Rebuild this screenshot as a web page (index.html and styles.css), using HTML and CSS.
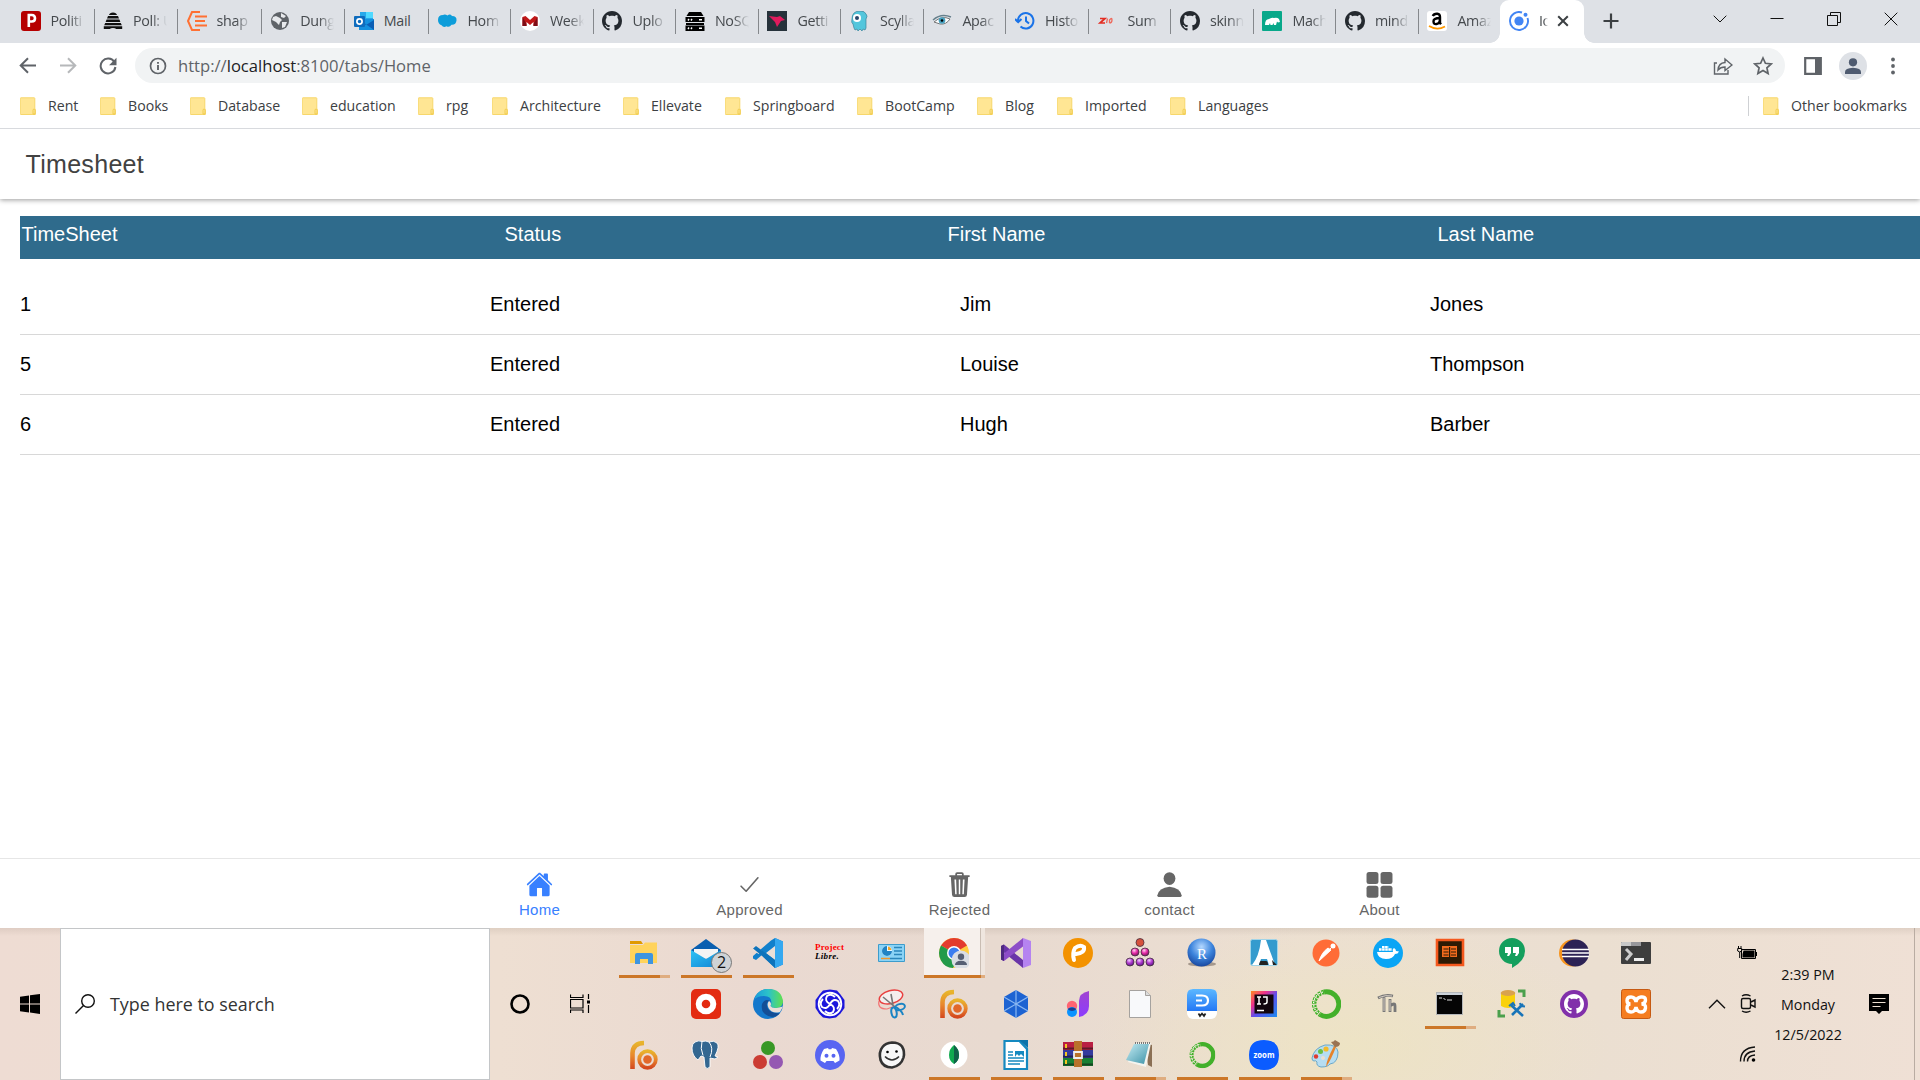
FILE: index.html
```html
<!DOCTYPE html>
<html lang="en">
<head>
<meta charset="utf-8">
<title>Timesheet</title>
<link rel="stylesheet" href="styles.css">
</head>
<body>
<svg class="defs" width="0" height="0" aria-hidden="true">
  <defs>
    <linearGradient id="gRo" x1="0" y1="0" x2="0" y2="1"><stop offset="0" stop-color="#e8b42c"/><stop offset=".5" stop-color="#e8862c"/><stop offset="1" stop-color="#d4481e"/></linearGradient>
    <linearGradient id="gBlue" x1="0" y1="0" x2="0" y2="1"><stop offset="0" stop-color="#5cb8ff"/><stop offset="1" stop-color="#2478f5"/></linearGradient>
    <linearGradient id="gMail" x1="0" y1="0" x2="1" y2="1"><stop offset="0" stop-color="#2fc3f5"/><stop offset="1" stop-color="#1184d4"/></linearGradient>
    <linearGradient id="gEdge" x1="0" y1="0" x2="1" y2="0"><stop offset="0" stop-color="#1a9bdc"/><stop offset=".5" stop-color="#2cc3c8"/><stop offset="1" stop-color="#62e04c"/></linearGradient>
    <linearGradient id="gPurple" x1="0" y1="0" x2="0" y2="1"><stop offset="0" stop-color="#a144d0"/><stop offset="1" stop-color="#8c3cff"/></linearGradient>
    <linearGradient id="gIj" x1="0" y1="0" x2="1" y2="1"><stop offset="0" stop-color="#ff8a1f"/><stop offset=".3" stop-color="#f0308c"/><stop offset=".55" stop-color="#5a50f0"/><stop offset="1" stop-color="#1c8cf0"/></linearGradient>
    <linearGradient id="gPad" x1="0" y1="0" x2="1" y2="1"><stop offset="0" stop-color="#c4ecf4"/><stop offset="1" stop-color="#3e93a8"/></linearGradient>
    <radialGradient id="gR" cx=".5" cy=".3" r=".7"><stop offset="0" stop-color="#b4d8ff"/><stop offset=".55" stop-color="#3c84dc"/><stop offset="1" stop-color="#1a48a0"/></radialGradient>
    <radialGradient id="gPink" cx=".4" cy=".3" r=".7"><stop offset="0" stop-color="#ffd0f0"/><stop offset=".5" stop-color="#e82ca8"/><stop offset="1" stop-color="#7a1560"/></radialGradient>
    <radialGradient id="gViolet" cx=".4" cy=".3" r=".7"><stop offset="0" stop-color="#f0d0ff"/><stop offset=".5" stop-color="#b23cd0"/><stop offset="1" stop-color="#5a1a80"/></radialGradient>
    <symbol id="folder" viewBox="0 0 16 18"><path d="M1 .8h13.2q.6 0 .6.6v10l1 1v4.400q0 .7-.7.7H1q-.8 0-.8-.8V1.600Q.2.800 1 .8z" fill="#ffe694" stroke="#f7d76b"/><path d="M13 17v-3.600q0-1.400 1-1.400t1 1.400V17z" fill="#ffe694" stroke="#edc63f" stroke-width=".8"/></symbol>
    <symbol id="github" viewBox="0 0 16 16"><path d="M8 0C3.580 0 0 3.580 0 8c0 3.540 2.290 6.530 5.470 7.590.4.070.55-.17.55-.38 0-.19-.01-.82-.01-1.490-2.010.37-2.530-.49-2.690-.94-.09-.23-.48-.94-.82-1.130-.28-.15-.68-.52-.01-.53.63-.01 1.080.58 1.230.82.72 1.210 1.870.87 2.330.66.07-.52.28-.87.51-1.070-1.780-.2-3.640-.89-3.640-3.950 0-.87.31-1.590.82-2.150-.08-.2-.36-1.020.08-2.120 0 0 .67-.21 2.200.82.64-.18 1.320-.27 2-.27s1.360.09 2 .27c1.530-1.040 2.200-.82 2.200-.82.44 1.100.16 1.920.08 2.120.51.56.82 1.270.82 2.150 0 3.070-1.870 3.750-3.650 3.950.29.25.54.73.54 1.480 0 1.070-.01 1.930-.01 2.200 0 .21.15.46.55.38A8 8 0 0 0 16 8c0-4.420-3.580-8-8-8z"/></symbol>
    <symbol id="ro" viewBox="0 0 30 30"><g fill="none" stroke="url(#gRo)"><path d="M3.500 29V13Q4 3.200 15 3" stroke-width="4.600"/><circle cx="18.500" cy="19.500" r="8.300" stroke-width="3.800"/></g><circle cx="18.500" cy="19.500" r="4.300" fill="#e2682a"/></symbol>
    <symbol id="ring" viewBox="0 0 30 30"><path d="M13 3A12.300 12.300 0 1 1 9 25.500" fill="none" stroke="#43b02a" stroke-width="5"/><path d="M13 3A12.300 12.300 0 0 0 9 25.500" fill="none" stroke="#43b02a" stroke-width="4.500" stroke-dasharray="2.500 1"/><path d="M12 3A12 12 0 0 0 7 24" fill="none" stroke="#fff" stroke-width="1.200" stroke-dasharray="1.500 2"/></symbol>
  </defs>
</svg>

<div class="tabstrip">
  <div class="tab"><svg class="fav" viewBox="0 0 20 20"><rect width="20" height="20" rx="3" fill="#b60000"/><path d="M7.800 16V4h3q3.200 0 3.200 3.200T10.800 10.500h-3" fill="none" stroke="#fff" stroke-width="2.600"/></svg><span class="label">Politi</span></div>
  <div class="tab wide"><svg class="fav" viewBox="0 0 20 20"><g fill="#111"><path d="M6 4q.6-2.500 4-2.500T14 4zM5 5h10l1 2.500H4zM3.600 8.500h12.800l1 2.500H2.600zM2.200 12h15.600l1 2.300H1.200zM.8 15.300h18.400v2.700h-6q-.8-1-3.200-1t-3.200 1h-6z"/></g></svg><span class="label">Poll: U</span></div>
  <div class="tab wide"><svg class="fav" viewBox="0 0 20 20"><g fill="none" stroke="#ff7033" stroke-width="2"><path d="M13 1H5L1 10l4 9h8M8 5.500h12M8 10h10M8 14.500h12"/></g></svg><span class="label">shap</span></div>
  <div class="tab wide"><svg class="fav" viewBox="0 0 20 20"><circle cx="10" cy="10" r="9" fill="#5f6368"/><path d="M3 6l3-1 4 2 2 2-2 2-1 3-3-3-4-2zM11 2l5 3-2 2-3-1zM12 11l5 0-2 5-3 1z" fill="#e7e9ec"/></svg><span class="label">Dung</span></div>
  <div class="tab wide"><svg class="fav" viewBox="0 0 20 20"><rect x="6" y="1" width="13" height="9" fill="#28a8ea"/><path d="M12 1h7v6h-7z" fill="#50d9ff"/><path d="M5 8h15v11H5z" fill="#1490df"/><path d="M6 9l6 5 8-5v10z" fill="#0a5eb5"/><rect y="5" width="11" height="11" rx="1" fill="#0f6cbd"/><circle cx="5.500" cy="10.500" r="2.600" fill="none" stroke="#fff" stroke-width="1.700"/></svg><span class="label short">Mail</span></div>
  <div class="tab"><svg class="fav" viewBox="0 0 20 20"><path d="M1 9q0-5 5-5 2-1 4.500.5Q13 2.500 15 5q5 0 4.500 4.500-.5 4.500-5 4.200-2 3-5 1.500-3 2-5-1Q1 13 1 9z" fill="#0d9dda"/></svg><span class="label">Hom</span></div>
  <div class="tab"><svg class="fav" viewBox="0 0 20 20"><circle cx="10" cy="10" r="10" fill="#fff"/><path d="M2.500 6l3-1L10 9l4.500-4 3 1v9h-4v-4L10 14l-3.500-3v4h-4z" fill="#c01818"/><path d="M2.500 6v9h4v-2zM17.500 6v9h-4v-2z" fill="#7d0d16"/></svg><span class="label">Week</span></div>
  <div class="tab"><svg class="fav ink"><use href="#github"/></svg><span class="label">Uplo</span></div>
  <div class="tab"><svg class="fav" viewBox="0 0 20 20"><path d="M4 1h12l2.500 4h-17zM.5 6h19v5H.5zM1 12h18v2H1zM.5 14.500h19V20H.5z"/><path d="M3 9.500l1-1.500M6 9.500l1-1.500M14 8.700h3M3 18l1-1.500M6 18l1-1.500M14 17.300h3" stroke="#fff" stroke-width="1.400"/></svg><span class="label">NoSQ</span></div>
  <div class="tab"><svg class="fav" viewBox="0 0 20 20"><rect width="20" height="20" fill="#26323b"/><path d="M2 5l8 1 3-1 5 4-4 1-4 6-2-5z" fill="#e01b5d"/></svg><span class="label">Getti</span></div>
  <div class="tab"><svg class="fav" viewBox="0 0 20 20"><path d="M2 8Q2 0 10 0q5 0 6 3 2 2 0 5v9l-1 2-2-1-1 2-2-2-2 2-1-2-2 1-1-2-1-4Q1 12 2 8z" fill="#53c6dc" stroke="#39839a" stroke-width=".7"/><circle cx="7" cy="7" r="4" fill="#fff"/><circle cx="7" cy="7" r="2" fill="#27466b"/></svg><span class="label">Scylla</span></div>
  <div class="tab"><svg class="fav" viewBox="0 0 20 20"><path d="M1 9Q9 2 19 6" stroke="#657f8b" fill="none" stroke-width="1.400"/><path d="M2 11q8-7 16-3-4 6-10 5z" fill="#fff" stroke="#777"/><circle cx="10" cy="9.500" r="3.300" fill="#47a0bf"/><circle cx="10" cy="9.500" r="1.300"/></svg><span class="label">Apac</span></div>
  <div class="tab"><svg class="fav" viewBox="0 0 20 20"><g fill="none" stroke="#1a73e8" stroke-width="2"><path d="M3 10a7.700 7.700 0 1 1 2.500 5.500M0 8l3.200 3.200L6.500 8M11 5.500V10l3 2.500"/></g></svg><span class="label">Histo</span></div>
  <div class="tab"><svg class="fav" viewBox="0 0 20 20"><path d="M3 7.500h5l-5 4.500h5" stroke="#e32d22" stroke-width="1.700" fill="none"/><path d="M10.500 7.500l-1 4.500M12.500 12V9q2.500-3 2.500 0t-2.500 3" stroke="#ee6a5d" stroke-width="1.300" fill="none"/></svg><span class="label">Sum</span></div>
  <div class="tab"><svg class="fav ink"><use href="#github"/></svg><span class="label">skinn</span></div>
  <div class="tab"><svg class="fav" viewBox="0 0 20 20"><rect width="20" height="20" rx="1" fill="#08a88a"/><path d="M3 14q0-6 4-6 3-2 5-1 3-1 5 1l1 3-2 .5-1-1-1 3.500h-2l-.5-2-1 2H8.500L8 12l-1 2z" fill="#fff"/></svg><span class="label">Mach</span></div>
  <div class="tab"><svg class="fav ink"><use href="#github"/></svg><span class="label">mind</span></div>
  <div class="tab last"><svg class="fav" viewBox="0 0 20 20"><rect width="20" height="20" rx="3" fill="#fff"/><path d="M5.800 5q1-2.500 4.500-2.300Q13 3 13 6v6l1 1.300M13 7Q6.500 7 6.500 10.300T9.500 13Q13 12.500 13 8" fill="none" stroke="#000" stroke-width="2.400"/><path d="M2 15q8 5 16 .5" fill="none" stroke="#f90" stroke-width="1.700"/></svg><span class="label">Amaz</span></div>
  <div class="tab active"><svg class="fav" viewBox="0 0 20 20"><path d="M13 1.500A9 9 0 1 0 18.500 7" fill="none" stroke="#4285f4" stroke-width="1.900"/><circle cx="10" cy="10" r="4.600" fill="#4285f4"/><circle cx="16.500" cy="3.700" r="2" fill="#4285f4"/></svg><span class="label">Io</span><svg class="tabclose" viewBox="0 0 12 12"><path d="M1.200 1.200l9.600 9.600M10.800 1.200l-9.600 9.600" stroke="#3c4043" stroke-width="2"/></svg></div>
  <svg class="newtab" viewBox="0 0 16 16"><path d="M8 .5v15M.5 8h15" stroke="#3c4043" stroke-width="2.200"/></svg>
  <div class="winbtns">
    <svg viewBox="0 0 14 14"><path d="M.7 3.700L7 10l6.300-6.300" class="thin"/></svg>
    <svg viewBox="0 0 14 14"><path d="M.5 6.500h13" class="thin"/></svg>
    <svg viewBox="0 0 14 14"><path d="M.5 3.500h10v10H.500zM3.500 3.500v-3h10v10h-3" class="thin"/></svg>
    <svg viewBox="0 0 14 14"><path d="M.7.7l12.600 12.600M13.300.7L.7 13.300" class="thin"/></svg>
  </div>
</div>

<div class="toolbar">
  <svg class="nav" viewBox="0 0 18 18"><path d="M17 8.500H2M9 1.200L1.700 8.500 9 15.800" class="line"/></svg>
  <svg class="nav faded" viewBox="0 0 18 18"><path d="M1 8.500h15M9 1.200l7.300 7.300L9 15.800" class="line"/></svg>
  <svg class="nav" viewBox="0 0 18 18"><path d="M15.300 5A7.400 7.400 0 1 0 16.400 10" class="line"/><path d="M17.500.8v7.400h-7.400z" fill="#5f6368"/></svg>
  <div class="omnibox">
    <svg class="info" viewBox="0 0 18 18"><circle cx="9" cy="9" r="7.500" fill="none" stroke="#5f6368" stroke-width="1.700"/><path d="M9 8v5M9 5v1.800" stroke="#5f6368" stroke-width="1.900"/></svg>
    <span class="url">http://<b>localhost</b>:8100/tabs/Home</span>
    <svg class="share" viewBox="0 0 20 20"><path d="M4 7H1.500v11H15v-4" class="hair"/><path d="M5 14q.5-7 7-7.500V3l7 6-7 5.500V11q-4.500 0-7 3z" class="hair"/></svg>
    <svg class="star" viewBox="0 0 20 20"><path d="M10 2l2.400 5.300 5.800.6-4.300 3.900 1.200 5.700L10 14.600l-5.100 2.900 1.200-5.700L1.800 7.900l5.800-.6z" fill="none" stroke="#5f6368" stroke-width="1.700"/></svg>
  </div>
  <svg class="panel" viewBox="0 0 18 18"><path d="M1.200 1.200h15.600v15.600H1.200z" fill="none" stroke="#5f6368" stroke-width="2.200"/><path d="M11 1h6v16h-6z" fill="#5f6368"/></svg>
  <svg class="avatar" viewBox="0 0 28 28"><circle cx="14" cy="14" r="14" fill="#dee1e6"/><circle cx="14" cy="10.300" r="4.100" fill="#4f5b70"/><path d="M6 22v-2q0-4 8-4.300 8 .3 8 4.300v2z" fill="#4f5b70"/></svg>
  <svg class="dots" viewBox="0 0 4 18"><circle cx="2" cy="2.500" r="1.900"/><circle cx="2" cy="9" r="1.900"/><circle cx="2" cy="15.500" r="1.900"/></svg>
</div>

<div class="bookmarks">
  <div class="bm"><svg><use href="#folder"/></svg>Rent</div>
  <div class="bm"><svg><use href="#folder"/></svg>Books</div>
  <div class="bm"><svg><use href="#folder"/></svg>Database</div>
  <div class="bm"><svg><use href="#folder"/></svg>education</div>
  <div class="bm"><svg><use href="#folder"/></svg>rpg</div>
  <div class="bm"><svg><use href="#folder"/></svg>Architecture</div>
  <div class="bm"><svg><use href="#folder"/></svg>Ellevate</div>
  <div class="bm"><svg><use href="#folder"/></svg>Springboard</div>
  <div class="bm"><svg><use href="#folder"/></svg>BootCamp</div>
  <div class="bm"><svg><use href="#folder"/></svg>Blog</div>
  <div class="bm"><svg><use href="#folder"/></svg>Imported</div>
  <div class="bm"><svg><use href="#folder"/></svg>Languages</div>
  <div class="bm other"><svg><use href="#folder"/></svg>Other bookmarks</div>
</div>

<header class="app-header"><h1>Timesheet</h1></header>

<main class="content">
  <div class="thead"><span>TimeSheet</span><span>Status</span><span>First Name</span><span>Last Name</span></div>
  <div class="trow"><span>1</span><span>Entered</span><span>Jim</span><span>Jones</span></div>
  <div class="trow"><span>5</span><span>Entered</span><span>Louise</span><span>Thompson</span></div>
  <div class="trow"><span>6</span><span>Entered</span><span>Hugh</span><span>Barber</span></div>
</main>

<nav class="tabbar">
  <div class="tb selected"><svg viewBox="0 0 512 512"><path d="M261.560 101.280a8 8 0 0 0-11.060 0L66.400 277.150a8 8 0 0 0-2.470 5.790L63.900 448a32 32 0 0 0 32 32H192a16 16 0 0 0 16-16V328a8 8 0 0 1 8-8h80a8 8 0 0 1 8 8v136a16 16 0 0 0 16 16h96.060a32 32 0 0 0 32-32V282.940a8 8 0 0 0-2.470-5.790z"/><path d="M490.910 244.150l-74.800-71.560V64a16 16 0 0 0-16-16h-48a16 16 0 0 0-16 16v32l-57.920-55.380C272.770 35.140 264.710 32 256 32c-8.680 0-16.720 3.140-22.140 8.630L21.160 244.130c-6.220 6-7 15.870-1.340 22.370A16 16 0 0 0 43 267.560L250.500 69.280a8 8 0 0 1 11.060 0l207.520 198.280a16 16 0 0 0 22.590-.44c6.140-6.360 5.630-16.860-.76-22.970z"/></svg><span>Home</span></div>
  <div class="tb"><svg viewBox="0 0 512 512"><path d="M416 128L192 384l-96-96" fill="none" stroke="#666" stroke-width="30" stroke-linecap="round" stroke-linejoin="round"/></svg><span>Approved</span></div>
  <div class="tb"><svg viewBox="0 0 512 512"><path fill-rule="evenodd" d="M64 80h112V58q0-34 34-34h92q34 0 34 34v22h112v32h-28l-22 336q-3 44-45 44H159q-42 0-45-44L92 112H64zM210 80h92V56h-92zM160 160l14 280h28l-10-280zM242 160v280h28V160zM320 160l-10 280h28l14-280z"/></svg><span>Rejected</span></div>
  <div class="tb"><svg viewBox="0 0 512 512"><ellipse cx="256" cy="144" rx="112" ry="120"/><path d="M48 492q-24 0-22-30 25-142 230-164 205 22 230 164 2 30-22 30z"/></svg><span>contact</span></div>
  <div class="tb"><svg viewBox="0 0 512 512"><rect x="10" y="20" width="226" height="226" rx="48"/><rect x="276" y="20" width="226" height="226" rx="48"/><rect x="10" y="280" width="226" height="226" rx="48"/><rect x="276" y="280" width="226" height="226" rx="48"/></svg><span>About</span></div>
</nav>

<div class="taskbar">
  <div class="start"><svg viewBox="0 0 20 20"><path d="M0 2.800l9-1.300v8H0zM10 1.300L20 0v9.500H10zM0 10.500h9v8l-9-1.300zM10 10.500h10V20l-10-1.400z"/></svg></div>
  <div class="search"><svg viewBox="0 0 20 20"><circle cx="13" cy="7" r="6.300" fill="none" stroke="#111" stroke-width="1.400"/><path d="M8.500 11.500L.5 19.500" stroke="#111" stroke-width="1.400"/></svg><span>Type here to search</span></div>
  <div class="sys"><svg viewBox="0 0 20 20"><circle cx="10" cy="10" r="8.500" fill="none" stroke="#000" stroke-width="2.600"/></svg></div>
  <div class="sys view"><svg viewBox="0 0 20 20"><path d="M.5.500v3h12.500v-3M.5 5.500h12.500v8.500H.500zM.5 19v-3h12.500v3M18.500 0v5M18.500 11v8" fill="none" stroke="#000" stroke-width="1.200"/><path d="M17 6.500h3v3h-3z"/></svg></div>

  <div class="apps">
    <div class="app open multi"><svg viewBox="0 0 30 30"><path d="M1 3h11l2 3H1z" fill="#e09a00"/><path d="M1 7h13l2-2.500h12V25H1z" fill="#ffd35c"/><path d="M6 26V17q0-2 2-2h14q2 0 2 2v9h-5v-5h-8v5z" fill="#3e95e0"/></svg></div>
    <div class="app open"><svg viewBox="0 0 30 30"><path d="M0 12L15 1l15 11v6H0z" fill="#0a5fb0"/><path d="M3 11h24v9H3z" fill="#f4f4f4"/><path d="M0 12l15 9L30 12v17H0z" fill="url(#gMail)"/></svg><em>2</em></div>
    <div class="app open"><svg viewBox="0 0 30 30"><path d="M22 0l8 3.500v23L22 30 9 17l-6 5-3-1.500V18L18 2.500z" fill="#1180cc"/><path d="M22 8v14l-9-7zM0 12V9.500L3 8l6 5-3.500 3z" fill="#ecdfd7"/><path d="M0 10.500L3 8l19 14v8L8 17z" fill="#0e73bb"/><path d="M22 0l8 3.500v23L22 30z" fill="#35a8f0"/></svg></div>
    <div class="app"><div class="plibre"><b>Project</b><i>Libre.</i></div></div>
    <div class="app"><svg viewBox="0 0 30 30"><path d="M1.500 6.500h26v17h-26z" fill="#8bd3f6" stroke="#3c9ccc"/><circle cx="10" cy="13" r="5" fill="#e9f8ff"/><path d="M10 13V8a5 5 0 1 0 5 5z" fill="#2083c4"/><path d="M11 12V8.500q3 .5 3.500 3.500z" fill="#f2a424"/><path d="M17 9.500h8M17 13h8M17 16.500h8M13 20.500h12" stroke="#2b87bc" stroke-width="1.500"/><path d="M4 20.500h9" stroke="#f0962b" stroke-width="1.500"/></svg></div>
    <div class="app open focus"><svg viewBox="0 0 30 30"><circle cx="15" cy="15" r="15" fill="#ffcd40"/><path d="M15 15L2 7.500Q7 0 15 0q9 0 13 7.500z" fill="#e33b2e"/><path d="M15 15L2 7.500Q-2 15 2 22.500T14 30l6-12z" fill="#229a4a"/><circle cx="15" cy="15" r="7" fill="#fff"/><circle cx="15" cy="15" r="5.500" fill="#3a7df0"/><circle cx="22" cy="22" r="9.500" fill="#d9dde3"/><circle cx="22" cy="18.700" r="3.200" fill="#555f73"/><path d="M16 27q0-4 6-4.200 6 .2 6 4.200z" fill="#555f73"/></svg></div>
    <div class="app"><svg viewBox="0 0 30 30"><path d="M0 8l3-1.500L22 22v8L3 14.500V23l-3-1.500z" fill="#6a35a8"/><path d="M0 21.500L3 23 22 8.500V0L3 15.500z" fill="#8d4dc8"/><path d="M0 8l3-1.500V23l-3-1.500z" fill="#4e2a80"/><path d="M22 0l8 3v24l-8 3z" fill="#b583f0"/></svg></div>
    <div class="app"><svg viewBox="0 0 30 30"><circle cx="15" cy="15" r="15" fill="#f39200"/><path d="M11 22q-2-7 1-12 5-4 9-1 1 6-8 7" fill="none" stroke="#fff" stroke-width="4" stroke-linecap="round"/></svg></div>
    <div class="app"><svg viewBox="0 0 30 30"><g stroke="#453040" stroke-width=".8"><circle cx="15" cy="4.500" r="4" fill="#d6503c"/><circle cx="10" cy="14" r="4" fill="url(#gPink)"/><circle cx="20" cy="14" r="4" fill="url(#gPink)"/><circle cx="5" cy="24" r="4" fill="url(#gViolet)"/><circle cx="15" cy="24" r="4" fill="url(#gViolet)"/><circle cx="25" cy="24" r="4" fill="url(#gViolet)"/></g></svg></div>
    <div class="app"><svg viewBox="0 0 30 30"><ellipse cx="15" cy="26" rx="14" ry="2.500" fill="#a5988c"/><circle cx="14.500" cy="14.500" r="14" fill="url(#gR)"/><text x="15" y="20.500" class="rlogo">R</text></svg></div>
    <div class="app"><svg viewBox="0 0 30 30"><rect x="1.500" y="1.500" width="27" height="26" rx="2" fill="#349bce" stroke="#a1d4e8"/><path d="M12 2h5l9 25h-6l-2-6h-6l-2 6H3q7-8 9-25z" fill="#fff"/><path d="M10 27q1-5 3-4h4q2 0 2 4zM23 22l5 5h-4z" fill="#222"/></svg></div>
    <div class="app"><svg viewBox="0 0 30 30"><circle cx="15" cy="15" r="13.500" fill="#ff6c37"/><path d="M18 12l4-4M8 23l12-11-3-2q-6 4-9 13z" fill="#fff" stroke="#fff"/><circle cx="22" cy="8" r="2.500" fill="#fff"/></svg></div>
    <div class="app"><svg viewBox="0 0 30 30"><circle cx="15" cy="15" r="15" fill="#0aa5f5"/><path d="M4 14h16q-1-3 1-4 2 1 2 3l3 .5q-1 2.500-4 2.500-2 5-9 5-8 0-9-7z" fill="#fff"/><path d="M6 11.500h13" stroke="#fff" stroke-width="2.600" stroke-dasharray="2.600 .5"/><path d="M9 9h6.500" stroke="#fff" stroke-width="2.200" stroke-dasharray="2.600 .5"/></svg></div>
    <div class="app"><svg viewBox="0 0 30 30"><path d="M2 2h26v25H2z" fill="#2d1a04" stroke="#f4581d" stroke-width="2.600"/><path d="M7 8h15v11H7z" fill="#f26a1d"/><path d="M8.500 11h5M8.500 14h5M8.500 17h5M16 11h5M16 14h5M16 17h5M14.600 9v11" stroke="#2d1a04" stroke-width="1.200"/></svg></div>
    <div class="app"><svg viewBox="0 0 30 30"><path d="M15 0a13 13 0 0 1 13 13q0 10-13 17v-4A13 13 0 1 1 15 0z" fill="#149f5d"/><path d="M8 9h6v6l-2 3h-2l1-3H8zM16 9h6v6l-2 3h-2l1-3h-3z" fill="#fff"/></svg></div>
    <div class="app"><svg viewBox="0 0 30 30"><circle cx="13.500" cy="15" r="13.500" fill="#f7941e"/><circle cx="16.500" cy="15" r="13.500" fill="#2c2255"/><path d="M3 11.500h27M3 15h27M3 18.500h27" stroke="#fff" stroke-width="1.600"/></svg></div>
    <div class="app"><svg viewBox="0 0 30 30"><rect y="4" width="30" height="22" rx="1" fill="#3e3e3e"/><path d="M0 8V5q0-1 1-1h9v4z" fill="#c8c8c8"/><path d="M10 4h10v4H10z" fill="#98989c"/><path d="M5 11l5 5-5 6" fill="none" stroke="#ccc" stroke-width="3"/><path d="M13 21.500h10" stroke="#eee" stroke-width="3"/></svg></div>

    <div class="app"></div>
    <div class="app"><svg viewBox="0 0 30 30"><rect width="30" height="30" rx="5" fill="#e32b11"/><circle cx="15" cy="15" r="7.300" fill="none" stroke="#fff" stroke-width="6"/></svg></div>
    <div class="app"><svg viewBox="0 0 30 30"><circle cx="15" cy="15" r="15" fill="#1478cc"/><path d="M1 11Q4 0 15 0q14 0 15 13-1 6-7 6-6 0-5-3 2-9-7-9-7 0-10 4z" fill="url(#gEdge)"/><path d="M9 15q-2 11 10 13 5 0 8-4-3 1-8-1-6-3-5-9 1-2 3-2-5-3-8 3z" fill="#134e96"/><path d="M16 12q3 2 1.500 5 1.500 3 8.500 1.500l4-1-3 5.500q-8 2-11.500-4-2-4 .5-7z" fill="#ebded7"/></svg></div>
    <div class="app"><svg viewBox="0 0 30 30"><path d="M8 1.500L15 .5l7 1 3.500 4 4 5.500v8l-4 5.500-4.500 4-6.500 1-6.500-1-4-4L.5 19v-8l4-5.500z" fill="#1c16dc"/><g fill="none" stroke="#fff" stroke-width="1.900"><circle cx="15" cy="15" r="11.300"/><path d="M15 15q-6-3-3-8 4-3 8 1M15 15q3-6 8-3 3 4-1 8M15 15q6 3 3 8-4 3-8-1M15 15q-3 6-8 3-3-4 1-8"/></g></svg></div>
    <div class="app"><svg viewBox="0 0 30 30"><g fill="none"><ellipse cx="14" cy="8" rx="12" ry="6.500" transform="rotate(-15 14 8)" fill="#f5eeee" stroke="#e94040" stroke-width="1.500"/><path d="M2 12q-2 8 8 8l8-3" stroke="#f27878" stroke-width="1.200"/><path d="M6 8l12 10M14 5l2 11" stroke="#777" stroke-width="1.600"/><ellipse cx="23" cy="18" rx="5" ry="3" transform="rotate(-15 23 18)" stroke="#1b84c4" stroke-width="2"/><ellipse cx="17" cy="23.500" rx="2.600" ry="5" transform="rotate(-10 17 23.500)" stroke="#1b84c4" stroke-width="2"/><path d="M19 18q6 4 7 8" stroke="#1b84c4" stroke-width="2"/></g></svg></div>
    <div class="app"><svg><use href="#ro"/></svg></div>
    <div class="app"><svg viewBox="0 0 30 30"><path d="M15 1l12 7v14l-12 7-12-7V8z" fill="#1d63d2"/><path d="M15 1v28M3 8l24 14M27 8L3 22" stroke="#8ab8f2" stroke-width="1.200"/></svg></div>
    <div class="app"><svg viewBox="0 0 30 30"><path d="M16 28V12q0-8 10-10v15q0 9-10 11z" fill="url(#gPurple)"/><circle cx="9" cy="17" r="5.200" fill="#ff6472"/><circle cx="9" cy="23" r="5" fill="#0a93ff"/><path d="M4.500 20q4.500-3 9 0-4.500 4-9 0z" fill="#1b3f91"/></svg></div>
    <div class="app"><svg viewBox="0 0 30 30"><path d="M4.500 1.500h16l5 5v22h-21z" fill="#f8f9fb" stroke="#a5a29f"/><path d="M20.500 1.500v5h5" fill="#ddd" stroke="#a5a29f"/></svg></div>
    <div class="app"><svg viewBox="0 0 30 30"><rect width="30" height="30" rx="6" fill="#fff"/><path d="M0 22V6q0-6 6-6h18q6 0 6 6v16z" fill="url(#gBlue)"/><path d="M9 6.500h6q6 0 6 5t-6 5H9M9 11.500h6" fill="none" stroke="#fff" stroke-width="2.200"/><path d="M11.500 24.500l1.500 2.500 2-2.500 2 2.500 1.500-2.500" fill="none" stroke="#222" stroke-width="1.700"/></svg></div>
    <div class="app"><svg viewBox="0 0 30 30"><rect x="2" y="2" width="26" height="26" fill="url(#gIj)"/><rect x="5.500" y="5.500" width="19" height="19" fill="#12060f"/><path d="M8 8h4M10 8v7M8 15h4M14 8h4v5q0 2-3.500 2M8 21.500h7" fill="none" stroke="#fff" stroke-width="1.500"/></svg></div>
    <div class="app"><svg><use href="#ring"/></svg></div>
    <div class="app"><svg viewBox="0 0 30 30"><g fill="none" stroke="#777" stroke-width="2.800"><path d="M5 9q7-4 15-2M11 8v15M17 23V10M17 17q5-4 5 0v6"/></g><g fill="none" stroke="#eee2d7" stroke-width=".8"><path d="M6 8.500q7-3 13-1.500M11 9v13M17 22V11"/></g></svg></div>
    <div class="app open multi"><svg viewBox="0 0 30 30"><path d="M1.500 3.500h26v22h-26z" fill="#050505" stroke="#b5b8bb"/><path d="M2 5h25" stroke="#ccd3da" stroke-width="2"/><path d="M4 9h3M8.500 9l2 2M12 11h5" stroke="#ddd"/></svg></div>
    <div class="app"><svg viewBox="0 0 30 30"><path d="M4 4v13q7 4 14 0V4z" fill="#f9d10c"/><ellipse cx="11" cy="4" rx="7.300" ry="3" fill="#d9a24e"/><path d="M21 2h6v6M2 21v6h6" fill="none" stroke="#4ba04c" stroke-width="3"/><path d="M15 26l11-11M14 16l12 11" stroke="#1874b8" stroke-width="2.600"/><path d="M12 17l4-3 2 3M23 14l1 3 4 .5" fill="none" stroke="#1874b8" stroke-width="2"/></svg></div>
    <div class="app"><svg viewBox="0 0 30 30"><circle cx="15" cy="15" r="14" fill="#8130aa"/><circle cx="15" cy="15" r="10" fill="#8130aa"/><use href="#github" x="5" y="5" width="20" height="20" fill="#fff"/></svg></div>
    <div class="app"><svg viewBox="0 0 30 30"><rect x=".5" y=".5" width="29" height="29" rx="2" fill="#f57d20" stroke="#c65a12"/><path d="M10 8q-4 0-4 3.500T9.500 15Q6 15 6 19t4 4 5-5q1 5 5 5t4.500-4-4-4q4-.5 4-4T20 8t-5 5q-1-5-5-5z" fill="none" stroke="#fff" stroke-width="3.400"/></svg></div>

    <div class="app"><svg><use href="#ro"/></svg></div>
    <div class="app"><svg viewBox="0 0 30 30"><path d="M4 2q4-2 7-.5 4-1 7 .5 5-2 8 1 3 3-2 13l3 1-3 2-5-1v9q-3 3-5 0l-1-10-3-1-3 4Q1 16 1 8q0-4 3-6z" fill="#336791" stroke="#fff" stroke-width=".9"/><path d="M11 1.500q-2 7 1 14M18 2q5 6 1 15" fill="none" stroke="#fff" stroke-width="1"/></svg></div>
    <div class="app"><svg viewBox="0 0 30 30"><circle cx="15" cy="8" r="7" fill="#389826"/><circle cx="7" cy="22" r="7" fill="#cb3c33"/><circle cx="23" cy="22" r="7" fill="#9558b2"/></svg></div>
    <div class="app"><svg viewBox="0 0 30 30"><circle cx="15" cy="15" r="15" fill="#5865f2"/><path d="M9 9l4-1 .7 1.300h2.600L17 8l4 1q4 6 3.500 11.500L20 23l-1.500-2h-7L10 23l-4.500-2.500Q5 15 9 9z" fill="#fff"/><circle cx="11.500" cy="15.700" r="2" fill="#5865f2"/><circle cx="18.500" cy="15.700" r="2" fill="#5865f2"/></svg></div>
    <div class="app"><svg viewBox="0 0 30 30"><path d="M15 2.500q7 0 10 4 3 5 1.500 11Q24 26 15 27.500q-9 0-11.500-7.500-2-8 2-13 3-4 9.500-4.500z" fill="#f8f8f8" stroke="#333" stroke-width="2.600"/><circle cx="10.500" cy="12" r="1.300"/><circle cx="19.500" cy="11.500" r="1.300"/><path d="M8 16.500q7 7 14 0" fill="none" stroke="#333" stroke-width="1.600"/></svg></div>
    <div class="app open"><svg viewBox="0 0 30 30"><circle cx="15" cy="15" r="13.500" fill="#fff"/><path d="M15 5q5 4 5 10t-5 9q-5-3-5-9t5-10z" fill="#10aa50"/><path d="M15 5q5 4 5 10t-5 9z" fill="#116149"/></svg></div>
    <div class="app open"><svg viewBox="0 0 30 30"><path d="M3.500 1h15L26 9v20H3.500z" fill="#fff" stroke="#1589c0" stroke-width="2.200"/><path d="M18 0h9v8z" fill="#0b73aa"/><path d="M7 12h5M7 15h5M7 18h16M7 21h16M7 24h12" stroke="#1589c0" stroke-width="1.400"/><path d="M14 11h9v6l-3-3-2 2-2-2-2 3z" fill="#1589c0"/></svg></div>
    <div class="app open"><svg viewBox="0 0 30 30"><path d="M0 2h30v8H0z" fill="#b91f43"/><path d="M0 10h30v8H0z" fill="#343b9d"/><path d="M0 18h30v8H0z" fill="#198033"/><path d="M0 8.500h30M0 16.500h30M0 24.500h30" stroke="#151515" stroke-width="2" opacity=".55"/><path d="M3 4v4M3 12v4M3 20v4" stroke="#f3c622" stroke-width="2"/><path d="M11 1h8v26h-8z" fill="#b9722a"/><path d="M11 12h8v6h-8z" fill="none" stroke="#eee" stroke-width="1.800"/></svg></div>
    <div class="app open multi"><svg viewBox="0 0 30 30"><path d="M20 3l7 2v22l-4-2z" fill="#8b7055"/><path d="M10 3h16l-5 24-18-5z" fill="#f4f4ef"/><path d="M9 4h15l-5 20L1 20z" fill="url(#gPad)"/><path d="M10 3h15" stroke="#777" stroke-width="2" stroke-dasharray="1 1"/></svg></div>
    <div class="app open"><svg viewBox="-2 -2 34 34"><use href="#ring" width="30" height="30"/></svg></div>
    <div class="app open"><svg viewBox="0 0 30 30"><path d="M15 0q15 0 15 15T15 30 0 15 15 0z" fill="#0b5cff"/><rect x="1" y="1" width="28" height="28" rx="10" fill="#0b5cff"/><text x="15" y="17.500" class="zlogo" textLength="21" lengthAdjust="spacingAndGlyphs">zoom</text></svg></div>
    <div class="app open multi"><svg viewBox="0 0 30 30"><path d="M1 18Q3 8 14 5q12-1 13 7 0 11-8 12-2 3-9 3-5-1-4-5-1-2-3-1-2 0-2-3z" fill="#b6ddf2" stroke="#6ba9ca"/><circle cx="15" cy="9" r="2.600" fill="#f4ba28"/><circle cx="9.500" cy="11.500" r="2.500" fill="#6abf45"/><circle cx="5" cy="16.500" r="2.200" fill="#df3a31"/><circle cx="12" cy="18" r="2" fill="#ecdfd0"/><path d="M15 27q0-6 8-21l2 1q-5 13-10 20z" fill="#e5832a"/><path d="M20 2q3 0 4-2l5 3q0 4-5 4z" fill="#9a7353"/></svg></div>
  </div>

  <div class="tray">
    <svg class="chev" viewBox="0 0 18 10"><path d="M1 9.300L9 1.300l8 8" class="thin t2"/></svg>
    <div class="trayicons">
      <svg viewBox="0 0 20 16"><path d="M4.500 4.500h14v9h-14z" fill="none" stroke="#000"/><path d="M6.500 5.500h11v7h-12V9z"/><path d="M19 7h1v4h-1z"/><path d="M.7 3.500h4V6q-2 2-4 0zM1.500 1v2M4 1v2M2.700 7v6" fill="none" stroke="#000"/></svg>
      <svg viewBox="0 0 20 20"><rect x="4.500" y="5.500" width="9" height="10" rx="1.500" class="thin t2"/><path d="M14 9l4-2v7l-4-2M5 3q4-2.500 8.500 0M5 18q4 2.500 8.500 0" class="thin t2"/></svg>
      <svg viewBox="0 0 20 20"><path d="M3.500 17.500Q3.500 4 18 3M7 17.500Q7 8 18 7M10.500 17.500Q10.500 11.500 18 11" class="thin t2"/><circle cx="16.500" cy="16" r="1.800"/></svg>
    </div>
    <div class="clock"><span>2:39 PM</span><span>Monday</span><span>12/5/2022</span></div>
    <svg class="note" viewBox="0 0 20 20"><path d="M0 0h20v17h-7l-3 3-3-3H0z"/><path d="M3.500 4.500h13M3.500 8.500h13M3.500 12.500h8" stroke="#ede0d2" stroke-width="1.200"/></svg>
  </div>
</div>
</body>
</html>
```
FILE: styles.css
```css
* { box-sizing: border-box; }
body {
  margin: 0;
  width: 1920px;
  height: 1080px;
  overflow: hidden;
  display: flex;
  flex-direction: column;
  background: #fff;
  font-family: "Liberation Sans", Arial, sans-serif;
}
.defs { position: absolute; }
svg { display: block; flex: none; }
.thin { fill: none; stroke: #111; stroke-width: 1; }
.t2 { stroke-width: 1.4; }
.line { fill: none; stroke: #5f6368; stroke-width: 2; }
.hair { fill: none; stroke: #5f6368; stroke-width: 1.4; }

/* browser tabs */
.tabstrip {
  height: 43px;
  flex: none;
  display: flex;
  background: #dee1e6;
  padding-left: 12px;
  font: 14.3px/20px "Open Sans", "Noto Sans", sans-serif;
  color: #45494d;
}
.tab {
  width: 82.5px;
  flex: none;
  display: flex;
  padding: 11px 0 0 8.5px;
  background: linear-gradient(#85888c, #85888c) right 9px / 1px 25px no-repeat;
}
.tab.wide { width: 83.6px; }
.tab.last { background: none; width: 82px; }
.fav { width: 20px; height: 20px; }
.fav.ink { fill: #24292f; }
.label {
  margin-left: 10px;
  width: 34px;
  white-space: nowrap;
  letter-spacing: -0.3px;
  -webkit-mask-image: linear-gradient(90deg, #000 55%, transparent);
  mask-image: linear-gradient(90deg, #000 55%, transparent);
}
.label.short { -webkit-mask-image: none; mask-image: none; }
.tab.active {
  width: 84px;
  margin-left: -1px;
  background: #fff;
  border-radius: 9px 9px 0 0;
  padding-left: 9px;
  position: relative;
}
.tab.active::before, .tab.active::after {
  content: "";
  position: absolute;
  bottom: 0;
  width: 10px;
  height: 10px;
}
.tab.active::before { left: -10px; background: radial-gradient(circle at 0 0, transparent 9.5px, #fff 10px); }
.tab.active::after { right: -10px; background: radial-gradient(circle at 100% 0, transparent 9.5px, #fff 10px); }
.tab.active .label { width: 9px; }
.tabclose { width: 12px; height: 12px; margin: 4px 0 0 9px; }
.newtab { width: 16px; height: 16px; margin: 13px 0 0 19px; }
.winbtns { margin: 12px 22px 0 auto; display: flex; gap: 43px; }
.winbtns svg { width: 14px; height: 14px; }

/* address bar */
.toolbar {
  height: 45px;
  flex: none;
  display: flex;
  align-items: center;
  padding: 0 25px 0 19px;
}
.nav { width: 18px; height: 18px; margin-right: 22px; }
.nav.faded { opacity: 0.45; }
.omnibox {
  width: 1650px;
  height: 35px;
  margin: 0 19px 0 -4px;
  border-radius: 18px;
  background: #f1f3f4;
  display: flex;
  align-items: center;
  padding: 0 12px 0 14px;
}
.info { width: 18px; height: 18px; }
.url {
  margin-left: 11px;
  flex: 1;
  color: #5f6368;
  font: 16.6px/24px "Open Sans", "Noto Sans", sans-serif;
}
.url b { font-weight: 400; color: #202124; }
.share { width: 20px; height: 20px; }
.star { width: 20px; height: 20px; margin-left: 20px; }
.panel { width: 18px; height: 18px; }
.avatar { width: 28px; height: 28px; margin: 0 23px 0 17px; }
.dots { width: 4px; height: 18px; fill: #5f6368; margin-left: auto; }

/* bookmarks */
.bookmarks {
  height: 41px;
  flex: none;
  display: grid;
  grid-template-columns: 80px 90px 112px 116px 74px 131px 102px 132px 120px 80px 113px 578px 1fr;
  align-items: center;
  padding-left: 20px;
  padding-bottom: 5px;
  border-bottom: 1px solid #d8dade;
  font: 14.15px/20px "Open Sans", "Noto Sans", sans-serif;
  color: #3c4043;
}
.bm { display: flex; align-items: center; gap: 12px; white-space: nowrap; }
.bm svg { width: 16px; height: 18px; }
.bm.other { border-left: 1px solid #cfd1d4; padding-left: 14px; }

/* app page */
.app-header {
  height: 70px;
  flex: none;
  display: flex;
  align-items: center;
  padding: 1px 0 0 25.5px;
  box-shadow: 0 1px 5px rgba(0, 0, 0, 0.4);
  clip-path: inset(0 0 -10px 0);
}
.app-header h1 { margin: 0; font-size: 25px; font-weight: 400; letter-spacing: 0.31px; color: #424242; }
.content { flex: 1; padding: 17px 0 0 20px; font-size: 20px; color: #000; }
.thead {
  height: 43px;
  margin-bottom: 16px;
  padding: 7px 0 0 1.5px;
  display: grid;
  grid-template-columns: 483px 443px 490px 1fr;
  background: #2f6b8c;
  color: #fff;
  line-height: 23px;
}
.trow {
  height: 60px;
  padding-bottom: 1px;
  display: grid;
  grid-template-columns: 470px 470px 470px 1fr;
  align-items: center;
  border-bottom: 1px solid #d8d8d8;
}
.tabbar {
  height: 70px;
  flex: none;
  display: flex;
  justify-content: center;
  padding-right: 1px;
  border-top: 1px solid #e6e6e6;
  color: #666;
  font-size: 15px;
  letter-spacing: 0.3px;
}
.tb { width: 210px; display: flex; flex-direction: column; align-items: center; padding-top: 12px; line-height: 18px; }
.tb svg { width: 27px; height: 27px; margin-bottom: 3px; fill: #666; }
.tb.selected { color: #3880ff; }
.tb.selected svg { fill: #3880ff; }

/* desktop taskbar */
.taskbar {
  height: 152px;
  flex: none;
  display: flex;
  align-items: center;
  background:
    linear-gradient(rgba(90, 70, 55, 0.1), transparent 8px),
    radial-gradient(ellipse 260px 130px at 1350px 120px, rgba(238, 229, 190, 0.7), transparent),
    linear-gradient(90deg, #eedcd3 0, #eedfd2 500px, #ead9d1 750px, #e8dad0 1000px, #ecdfd2 1300px, #ebdfd1 1600px, #efe0d5 1920px);
}
.start { width: 60px; padding-left: 20px; }
.start svg, .sys svg { width: 20px; height: 20px; }
.search {
  width: 430px;
  height: 152px;
  border: 1px solid #c4c6c8;
  background: #fff;
  display: flex;
  align-items: center;
  padding-left: 14px;
  color: #333;
  font: 17.9px/26px "Open Sans", "Noto Sans", sans-serif;
}
.search svg { width: 20px; height: 20px; margin-right: 15px; }
.sys { width: 60px; padding-left: 20px; }
.sys.view { width: 63px; }
.apps {
  align-self: flex-end;
  width: 1054px;
  display: grid;
  grid-template-columns: repeat(17, 62px);
  grid-template-rows: 50px 51px 51px;
}
.app { position: relative; display: flex; align-items: flex-end; justify-content: center; padding-bottom: 10px; }
.app svg { width: 30px; height: 30px; }
.app.open {
  background: linear-gradient(#cc7728, #cc7728) 6px 100% / 51px 3px no-repeat;
}
.app.multi {
  background: linear-gradient(90deg, #cc7728 41px, #dfad80 41px) 6px 100% / 51px 3px no-repeat;
}
.app.focus {
  background:
    linear-gradient(90deg, #cc7728 57px, #dfad80 57px) 0 100% / 61px 3px no-repeat,
    linear-gradient(90deg, #f6f0ec 56px, #c9bdb3 56px, #c9bdb3 57px, #efe6df 57px) 0 0 / 61px 100% no-repeat;
  margin-left: 1px;
  padding-right: 1px;
}
.app em {
  position: absolute;
  left: 36px;
  top: 24px;
  width: 21px;
  height: 21px;
  border: 1px solid #777;
  border-radius: 50%;
  background: #cfd3d6;
  color: #111;
  font: normal 16px/18px "Open Sans", sans-serif;
  text-align: center;
}
.plibre {
  width: 30px;
  height: 25px;
  display: flex;
  flex-direction: column;
  font: bold 9px/9px "Liberation Serif", serif;
  white-space: nowrap;
}
.plibre b { color: #f00; letter-spacing: 0.2px; }
.plibre i { color: #000; letter-spacing: 0.3px; }
.rlogo { font: 15px "Liberation Serif", serif; fill: #fff; text-anchor: middle; }
.zlogo { font: bold 8px "Open Sans", sans-serif; fill: #fff; text-anchor: middle; }

.tray {
  flex: 1;
  height: 152px;
  margin-right: 5px;
  border-right: 1px solid #b9aca2;
  display: flex;
  align-items: center;
  padding-left: 41px;
  font: 14.3px/30px "Open Sans", "Noto Sans", sans-serif;
  color: #111;
}
.chev { width: 18px; height: 10px; }
.trayicons { width: 20px; margin-left: 11px; height: 152px; display: flex; flex-direction: column; justify-content: space-between; padding: 17px 0 16px; }
.trayicons svg { width: 20px; }
.clock { width: 76px; margin-left: 13px; padding-top: 1px; display: flex; flex-direction: column; align-items: center; white-space: nowrap; }
.note { width: 20px; height: 20px; margin-left: 23px; }
```
